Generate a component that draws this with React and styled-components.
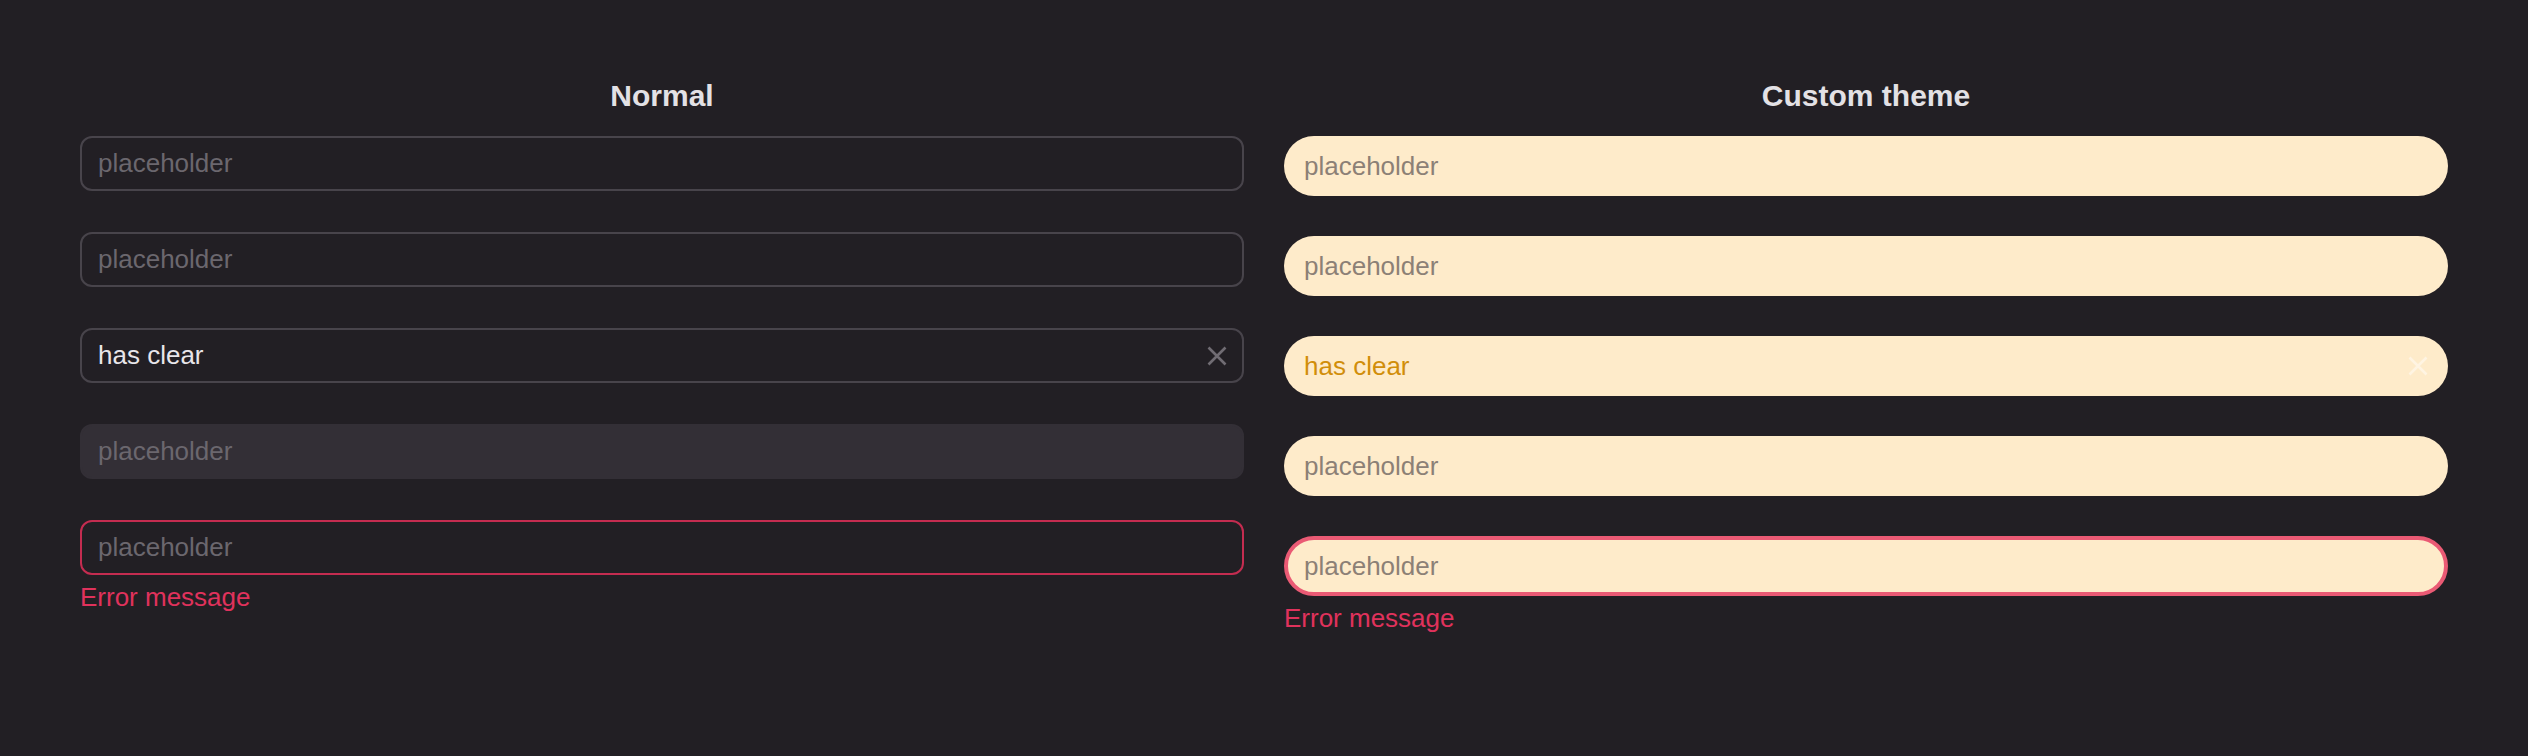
import React from 'react';
import styled, { createGlobalStyle, css } from 'styled-components';

const GlobalStyle = createGlobalStyle`
  html, body {
    margin: 0;
    background: #221f24;
  }
  body {
    font-family: 'Liberation Sans', Arial, sans-serif;
    color: #e3e1e5;
  }
`;

const Page = styled.div`
  display: grid;
  grid-template-columns: 1fr 1fr;
  column-gap: 40px;
  padding: 79px 80px 0;
  min-height: 756px;
  box-sizing: border-box;
`;

const Column = styled.section`
  display: flex;
  flex-direction: column;
`;

const Title = styled.h2`
  margin: 0 0 23px;
  font-size: 30px;
  line-height: 34px;
  font-weight: 700;
  text-align: center;
  color: #e3e1e5;
`;

const FieldList = styled.div`
  display: flex;
  flex-direction: column;
  gap: ${(p) => (p.$custom ? '40px' : '41px')};
`;

const Field = styled.div`
  display: flex;
  flex-direction: column;
`;

const InputWrap = styled.div`
  position: relative;
`;

const normalInput = css`
  height: 55px;
  border: 2px solid ${(p) => (p.$error ? '#c42c50' : '#48444b')};
  border-radius: 12px;
  padding: 0 44px 0 16px;
  background: ${(p) => (p.disabled ? '#332f36' : 'transparent')};
  color: #e8e6ea;
  ${(p) => p.disabled && 'border-color: #332f36;'}

  &::placeholder {
    color: #6b676e;
  }
`;

const customInput = css`
  height: 60px;
  border: ${(p) => (p.$error ? '4px solid #ea5a74' : 'none')};
  border-radius: 30px;
  padding: 0 48px 0 ${(p) => (p.$error ? '16px' : '20px')};
  background: #feebca;
  color: #d18e0a;

  &::placeholder {
    color: #8c8076;
  }
`;

const TextInput = styled.input`
  display: block;
  width: 100%;
  box-sizing: border-box;
  margin: 0;
  outline: none;
  font-family: 'Liberation Sans', Arial, sans-serif;
  font-size: 26px;
  ${(p) => (p.$custom ? customInput : normalInput)}
`;

const ClearButton = styled.button`
  position: absolute;
  top: 50%;
  right: ${(p) => (p.$custom ? '20px' : '17px')};
  transform: translateY(-50%);
  display: flex;
  align-items: center;
  justify-content: center;
  width: 20px;
  height: 20px;
  padding: 0;
  border: none;
  background: none;
  color: ${(p) => (p.$custom ? '#fff4e2' : '#706c73')};
  cursor: pointer;
`;

const ErrorText = styled.div`
  margin-top: 7px;
  font-size: 26px;
  line-height: 30px;
  color: #e0325c;
`;

const CloseIcon = () => (
  <svg width="20" height="20" viewBox="0 0 20 20" fill="none">
    <path
      d="M1.5 1.5 L18.5 18.5 M18.5 1.5 L1.5 18.5"
      stroke="currentColor"
      strokeWidth="2.6"
    />
  </svg>
);

const fields = [
  { key: 'plain' },
  { key: 'second' },
  { key: 'clear', value: 'has clear', clearable: true },
  { key: 'disabled', disabled: true },
  { key: 'error', error: 'Error message' },
];

const InputColumn = ({ title, custom }) => (
  <Column>
    <Title>{title}</Title>
    <FieldList $custom={custom}>
      {fields.map((f) => (
        <Field key={f.key}>
          <InputWrap>
            <TextInput
              $custom={custom}
              $error={!!f.error}
              disabled={f.disabled}
              placeholder="placeholder"
              defaultValue={f.value}
            />
            {f.clearable && (
              <ClearButton $custom={custom} aria-label="clear">
                <CloseIcon />
              </ClearButton>
            )}
          </InputWrap>
          {f.error && <ErrorText>{f.error}</ErrorText>}
        </Field>
      ))}
    </FieldList>
  </Column>
);

const App = () => (
  <>
    <GlobalStyle />
    <Page>
      <InputColumn title="Normal" />
      <InputColumn title="Custom theme" custom />
    </Page>
  </>
);

export default App;
